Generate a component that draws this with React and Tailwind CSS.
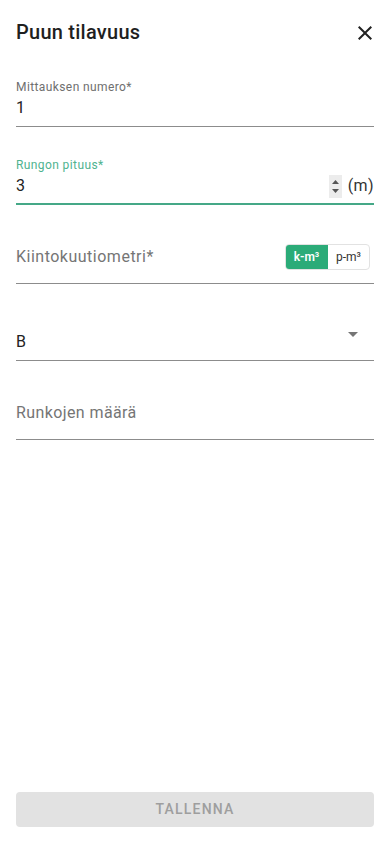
import React from "react";

export default function App() {
  return (
    <div
      className="h-screen w-full bg-white flex flex-col px-4 text-[#212121]"
      style={{ fontFamily: "Roboto, 'Noto Sans', Arial, sans-serif" }}
    >
      {/* Header */}
      <div className="pt-[18px] flex items-center justify-between">
        <h1 className="text-[20px] leading-[28px] font-medium tracking-[0.25px] text-[#1f1f1f]">Puun tilavuus</h1>
        <button className="w-6 h-6 -mr-[3px] mt-[2px] flex items-center justify-center text-[#222]">
          <svg width="24" height="24" viewBox="0 0 24 24" fill="currentColor">
            <path d="M19 6.41 17.59 5 12 10.59 6.41 5 5 6.41 10.59 12 5 17.59 6.41 19 12 13.41 17.59 19 19 17.59 13.41 12z" />
          </svg>
        </button>
      </div>

      {/* Field 1 */}
      <div className="mt-[33px] border-b border-[#8c8c8c] pb-[6px]">
        <div className="text-[12px] leading-4 text-[#6f6f6f] tracking-[0.4px]">Mittauksen numero*</div>
        <div className="mt-px text-[16px] leading-6 text-[#222]">1</div>
      </div>

      {/* Field 2 focused */}
      <div className="mt-[30px] border-b-2 border-[#45a887] pb-[5px]">
        <div className="text-[12px] leading-4 text-[#4fb38f] tracking-[0.4px]">Rungon pituus*</div>
        <div className="mt-px flex items-center h-6">
          <span className="flex-1 text-[16px] leading-6 text-[#222]">3</span>
          <div className="w-[13px] h-[23px] bg-[#ececec] flex flex-col items-center justify-center gap-[5px] mr-[6px]">
            <svg width="7" height="4" viewBox="0 0 7 4"><path d="M0 4 3.5 0 7 4z" fill="#555" /></svg>
            <svg width="7" height="4" viewBox="0 0 7 4"><path d="M0 0 3.5 4 7 0z" fill="#555" /></svg>
          </div>
          <span className="text-[16px] leading-6 text-[#333] tracking-[0.4px]">(m)</span>
        </div>
      </div>

      {/* Field 3 */}
      <div className="mt-[39px] border-b border-[#8c8c8c] pb-[13px]">
        <div className="flex items-center h-[26px]">
          <span className="flex-1 text-[16px] leading-6 text-[#757575] tracking-[0.5px]">Kiintokuutiometri*</span>
          <div className="flex h-[26px] w-[85px] rounded-[4px] border border-[#e2e2e2] overflow-hidden mr-[4px]">
            <div className="w-[43px] -ml-px -my-px h-[26px] bg-[#2bab78] rounded-l-[4px] flex items-center justify-center text-white text-[12px] font-semibold">
              k-m³
            </div>
            <div className="flex-1 flex items-center justify-center text-[#333] text-[12px]">p-m³</div>
          </div>
        </div>
      </div>

      {/* Field 4 select */}
      <div className="mt-[46px] border-b border-[#8c8c8c] pb-[6px]">
        <div className="flex items-start h-6">
          <span className="flex-1 text-[16px] leading-6 text-[#222]">B</span>
          <svg className="mt-[2px] mr-[16px]" width="10" height="5" viewBox="0 0 10 5">
            <path d="M0 0h10L5 5z" fill="#757575" />
          </svg>
        </div>
      </div>

      {/* Field 5 */}
      <div className="mt-[40px] border-b border-[#8c8c8c] pb-[14px]">
        <div className="text-[16px] leading-6 text-[#757575] tracking-[0.4px]">Runkojen määrä</div>
      </div>

      <div className="flex-1" />

      <button className="mb-[17px] h-[35px] w-full rounded-[4px] bg-[#e2e2e2] text-[#9e9e9e] text-[14px] font-medium tracking-[1.2px]">
        TALLENNA
      </button>
    </div>
  );
}
